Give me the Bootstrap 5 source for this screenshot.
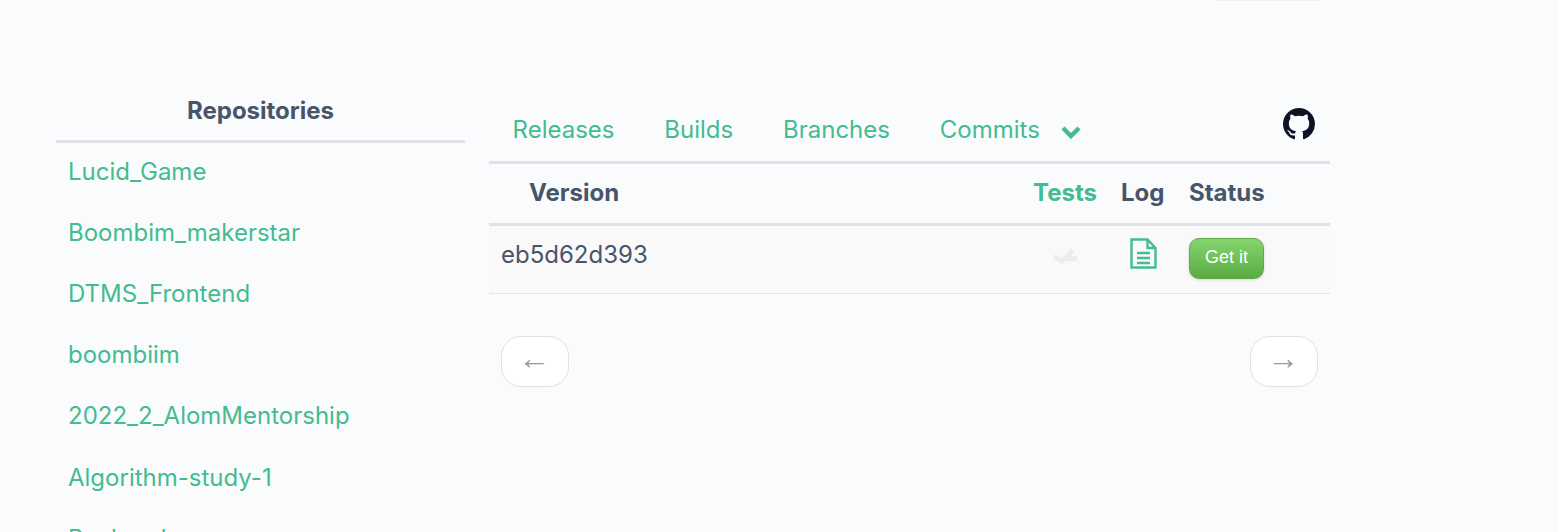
<!DOCTYPE html>
<html lang="en">
<head>
  <meta charset="UTF-8" />
  <title>Repositories</title>
  <link href="https://cdn.jsdelivr.net/npm/bootstrap@5.3.3/dist/css/bootstrap.min.css" rel="stylesheet" />
  <style>
    html, body { height: 532px; overflow: hidden; }
    body { background: #fafbfd; font-family: Inter, "Liberation Sans", sans-serif; color: #475569; }
    a { color: #43bc8f; text-decoration: none; }
    .page-shell { width: 1330px; padding: 98px 0 0 56px; gap: 24px; }
    .top-sliver { width: 104px; height: 1px; margin-left: 1216px; background: #f1f2f4; }
    .repo-side { width: 409px; flex: none; }
    .repo-title { font-size: 24px; font-weight: 700; line-height: 24px; padding-bottom: 17px; border-bottom: 3px solid #dfe1e6; text-align: center; margin: 0; }
    .repo-links { margin-top: -0.4px; }
    .repo-links a { display: block; font-size: 24px; line-height: 30px; padding: 14px 12px 17.2px; }
    .main-side { width: 841px; flex: none; padding-top: 11px; }
    .tab-row { height: 54px; border-bottom: 3px solid #dfe1e6; padding: 0 15px 0 23.6px; }
    .tab-row a { font-size: 24px; line-height: 30px; margin-right: 49.8px; padding-top: 5px; }
    .chev-icon { margin-left: 21px; margin-top: 4px; }
    .gh-mark { margin-left: auto; margin-top: -2px; }
    .head-row { height: 62px; padding-bottom: 2px; border-bottom: 3px solid #dfe1e6; font-size: 24px; font-weight: 700; }
    .build-row { height: 68px; padding-top: 12px; background: #f9f9f9; border-bottom: 1px solid #e2e8e4; }
    .col-version { width: 533px; flex: none; padding-left: 12px; }
    .head-row .col-version { padding-left: 40px; }
    .col-tests { width: 75px; flex: none; text-align: right; }
    .col-log { width: 92px; flex: none; padding-left: 24px; }
    .col-status { flex: none; }
    .build-row .col-version { font-size: 24px; line-height: 34px; }
    .check-mark { margin: 10px 19px 0 0; }
    .doc-mark { margin-left: 9px; display: block; }
    .get-btn { width: 75px; height: 41px; padding: 0 0 2px; border: 1px solid #5faa48; border-radius: 10px; background: linear-gradient(#85d56e, #5aab44); color: #fff; font-family: "Liberation Sans", sans-serif; font-size: 18px; box-shadow: 0 1px 3px rgba(0,0,0,.15); }
    .pager-row { padding: 42px 12px 0; }
    .pager-btn { width: 68px; height: 51px; padding: 0 2px 8px 0; border: 1px solid #e0e1e4; border-radius: 20px; background: #fff; color: #9a9a9a; font-family: "Liberation Sans", sans-serif; font-size: 32px; line-height: 1; }
  </style>
</head>
<body>
  <div class="top-sliver"></div>
  <div class="page-shell d-flex">
    <div class="repo-side">
      <h2 class="repo-title">Repositories</h2>
      <div class="repo-links">
        <a href="#">Lucid_Game</a>
        <a href="#">Boombim_makerstar</a>
        <a href="#">DTMS_Frontend</a>
        <a href="#">boombiim</a>
        <a href="#">2022_2_AlomMentorship</a>
        <a href="#">Algorithm-study-1</a>
        <a href="#">Backend</a>
      </div>
    </div>
    <div class="main-side">
      <div class="tab-row d-flex align-items-start">
        <a href="#">Releases</a>
        <a href="#">Builds</a>
        <a href="#">Branches</a>
        <a href="#" class="d-flex align-items-center m-0">Commits
          <svg class="chev-icon" width="20" height="14" viewBox="0 0 20 14"><path d="M2 3l8 8 8-8" fill="none" stroke="#43bc8f" stroke-width="4.4"/></svg>
        </a>
        <svg class="gh-mark" width="32" height="32" viewBox="0 0 16 16"><path fill="#0d1326" d="M8 0C3.58 0 0 3.58 0 8c0 3.54 2.29 6.53 5.47 7.59.4.07.55-.17.55-.38 0-.19-.01-.82-.01-1.49-2.01.37-2.53-.49-2.69-.94-.09-.23-.48-.94-.82-1.13-.28-.15-.68-.52-.01-.53.63-.01 1.08.58 1.23.82.72 1.21 1.87.87 2.33.66.07-.52.28-.87.51-1.07-1.78-.2-3.64-.89-3.64-3.95 0-.87.31-1.59.82-2.15-.08-.2-.36-1.02.08-2.12 0 0 .67-.21 2.2.82.64-.18 1.32-.27 2-.27s1.36.09 2 .27c1.53-1.04 2.2-.82 2.2-.82.44 1.1.16 1.92.08 2.12.51.56.82 1.27.82 2.15 0 3.07-1.87 3.75-3.65 3.95.29.25.54.73.54 1.48 0 1.07-.01 1.93-.01 2.2 0 .21.15.46.55.38A8.01 8.01 0 0 0 16 8c0-4.42-3.58-8-8-8z"/></svg>
      </div>
      <div class="head-row d-flex align-items-center">
        <div class="col-version">Version</div>
        <div class="col-tests"><a href="#">Tests</a></div>
        <div class="col-log">Log</div>
        <div class="col-status">Status</div>
      </div>
      <div class="build-row d-flex align-items-start">
        <div class="col-version">eb5d62d393</div>
        <div class="col-tests d-flex justify-content-end">
          <svg class="check-mark" width="25" height="16" viewBox="0 0 25 16"><path d="M1 8l8 5.500L20 2M11 10.500h13" fill="none" stroke="#ececec" stroke-width="5"/></svg>
        </div>
        <div class="col-log">
          <svg class="doc-mark" width="27" height="31" viewBox="0 0 27 31"><path d="M1.500 1.500h16l8 8.500v19.500h-24zM17.500 1.500v8.500h8" fill="none" stroke="#43bc8f" stroke-width="2.400"/><path d="M7 15h13M7 20h13M7 25h13" fill="none" stroke="#43bc8f" stroke-width="2.400"/></svg>
        </div>
        <div class="col-status"><button class="get-btn" type="button">Get it</button></div>
      </div>
      <div class="pager-row d-flex justify-content-between">
        <button class="pager-btn" type="button">←</button>
        <button class="pager-btn" type="button">→</button>
      </div>
    </div>
  </div>
  <script src="https://cdn.jsdelivr.net/npm/bootstrap@5.3.3/dist/js/bootstrap.bundle.min.js"></script>
</body>
</html>
